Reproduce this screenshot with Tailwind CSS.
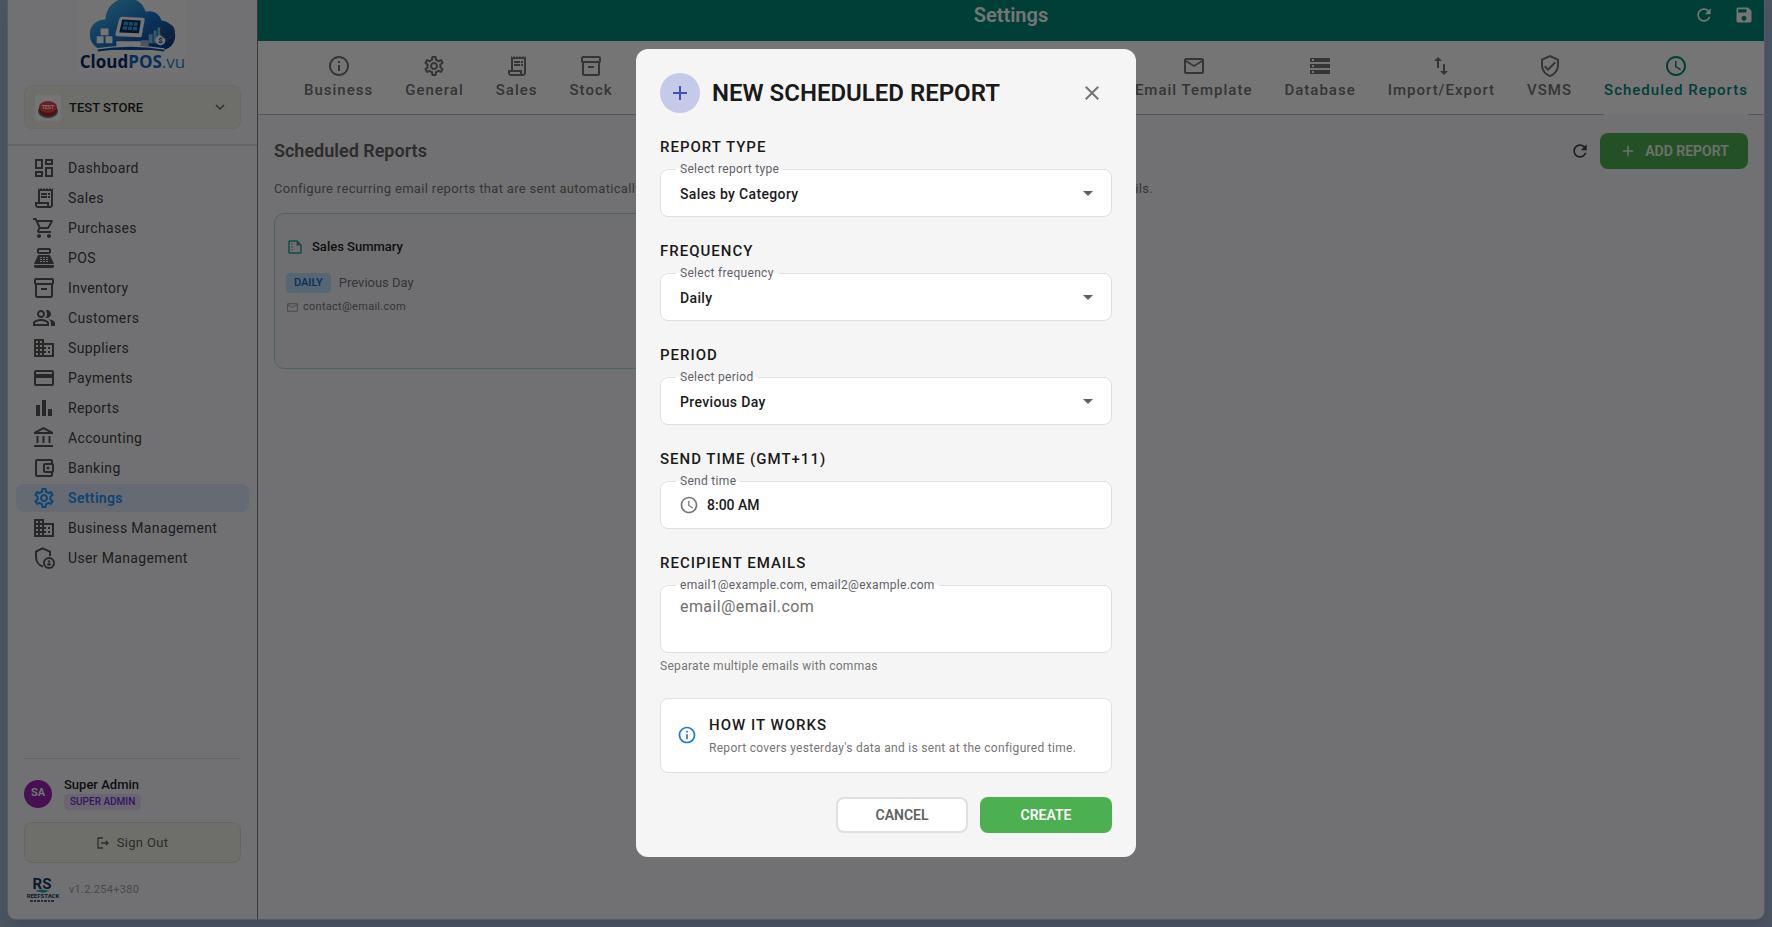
<!DOCTYPE html>
<html lang="en">
<head>
  <meta charset="UTF-8">
  <title>CloudPOS - Settings</title>
  <meta name="viewport" content="width=device-width, initial-scale=1.0">
  <script src="https://cdn.jsdelivr.net/npm/@tailwindcss/browser@4"></script>
</head>
<body class="bg-[#a3b7d3] font-['Roboto',sans-serif] text-[#1f1f1f]">
  <!-- Icons -->
  <svg class="hidden">
    <symbol id="i-dashboard" viewBox="0 0 24 24"><path d="M19 5v2h-4V5h4M9 5v6H5V5h4m10 8v6h-4v-6h4M9 17v2H5v-2h4M21 3h-8v6h8V3zM11 3H3v10h8V3zm10 8h-8v10h8V11zm-10 4H3v6h8v-6z"/></symbol>
    <symbol id="i-receipt" viewBox="0 0 24 24"><path d="M19.5 3.5L18 2l-1.500 1.500L15 2l-1.500 1.500L12 2l-1.500 1.500L9 2 7.500 3.500 6 2v14H3v3c0 1.660 1.340 3 3 3h12c1.660 0 3-1.340 3-3V2l-1.500 1.500zM15 20H6c-.55 0-1-.45-1-1v-1h10v2zm4-1c0 .55-.45 1-1 1s-1-.45-1-1v-3H8V5h11v14z"/><path d="M9 7h6v2H9zM16 7h2v2h-2zM9 10h6v2H9zM16 10h2v2h-2z"/></symbol>
    <symbol id="i-cart" viewBox="0 0 24 24"><path d="M15.55 13c.75 0 1.41-.41 1.75-1.03l3.58-6.49c.37-.66-.11-1.48-.87-1.48H5.21l-.94-2H1v2h2l3.600 7.590-1.350 2.440C4.520 15.370 5.480 17 7 17h12v-2H7l1.100-2h7.450zM6.160 6h12.150l-2.760 5H8.530L6.160 6zM7 18c-1.100 0-1.990.9-1.990 2S5.900 22 7 22s2-.9 2-2-.9-2-2-2zm10 0c-1.100 0-1.990.9-1.990 2s.89 2 1.990 2 2-.9 2-2-.9-2-2-2z"/></symbol>
    <symbol id="i-pos" viewBox="0 0 24 24"><path fill-rule="evenodd" d="M17 2H7c-1.100 0-2 .9-2 2v2c0 1.100.9 2 2 2h10c1.100 0 2-.9 2-2V4c0-1.100-.9-2-2-2zm0 4H7V4h10v2zM20 22H4c-1.100 0-2-.9-2-2v-1h20v1c0 1.100-.9 2-2 2zM18.530 10.190C18.210 9.470 17.490 9 16.700 9H7.300c-.79 0-1.510.47-1.830 1.190L2 18h20l-3.470-7.810zM8 11h2v1H8zM8 13h2v1H8zM8 15h2v1H8zM11 11h2v1h-2zM11 13h2v1h-2zM11 15h2v1h-2zM14 11h2v1h-2zM14 13h2v1h-2zM14 15h2v1h-2z"/></symbol>
    <symbol id="i-box" viewBox="0 0 24 24"><path d="M20 2H4c-1 0-2 .9-2 2v3.010c0 .72.43 1.340 1 1.690V20c0 1.100 1.100 2 2 2h14c.9 0 2-.9 2-2V8.700c.57-.35 1-.97 1-1.690V4c0-1.100-1-2-2-2zm-1 18H5V9h14v11zm1-13H4V4h16v3z"/><path d="M9 12h6v2H9z"/></symbol>
    <symbol id="i-people" viewBox="0 0 24 24"><path d="M16.670 13.130C18.040 14.060 19 15.320 19 17v3h4v-3c0-2.180-3.570-3.470-6.330-3.870zM15 12c2.210 0 4-1.790 4-4s-1.790-4-4-4c-.47 0-.91.1-1.330.24C14.500 5.270 15 6.580 15 8s-.5 2.730-1.330 3.760c.42.14.86.24 1.330.24zM9 12c2.210 0 4-1.790 4-4s-1.790-4-4-4-4 1.790-4 4 1.790 4 4 4zm0-6c1.100 0 2 .9 2 2s-.9 2-2 2-2-.9-2-2 .9-2 2-2zM9 13c-2.670 0-8 1.340-8 4v3h16v-3c0-2.660-5.330-4-8-4zm6 5H3v-.99C3.200 16.290 6.300 15 9 15s5.800 1.290 6 2v1z"/></symbol>
    <symbol id="i-domain" viewBox="0 0 24 24"><path d="M12 7V3H2v18h20V7H12zM6 19H4v-2h2v2zm0-4H4v-2h2v2zm0-4H4V9h2v2zm0-4H4V5h2v2zm4 12H8v-2h2v2zm0-4H8v-2h2v2zm0-4H8V9h2v2zm0-4H8V5h2v2zm10 12h-8v-2h2v-2h-2v-2h2v-2h-2V9h8v10zm-2-8h-2v2h2v-2zm0 4h-2v2h2v-2z"/></symbol>
    <symbol id="i-card" viewBox="0 0 24 24"><path d="M20 4H4c-1.110 0-1.990.89-1.990 2L2 18c0 1.110.89 2 2 2h16c1.110 0 2-.89 2-2V6c0-1.110-.89-2-2-2zm0 14H4v-6h16v6zm0-10H4V6h16v2z"/></symbol>
    <symbol id="i-chart" viewBox="0 0 24 24"><path d="M4 9h4v11H4zM16 13h4v7h-4zM10 4h4v16h-4z"/></symbol>
    <symbol id="i-bank" viewBox="0 0 24 24"><path d="M6.500 10h-2v7h2v-7zm6 0h-2v7h2v-7zm8.500 9H2v2h19v-2zm-2.500-9h-2v7h2v-7zm-7-6.740L16.710 6H6.290l5.210-2.740m0-2.260L2 6v2h19V6l-9.500-5z"/></symbol>
    <symbol id="i-wallet" viewBox="0 0 24 24"><path d="M21 7.280V5c0-1.100-.9-2-2-2H5c-1.110 0-2 .9-2 2v14c0 1.100.89 2 2 2h14c1.100 0 2-.9 2-2v-2.280c.59-.35 1-.98 1-1.720V9c0-.74-.41-1.370-1-1.720zM20 9v6h-7V9h7zM5 19V5h14v2h-6c-1.100 0-2 .9-2 2v6c0 1.100.9 2 2 2h6v2H5z"/><circle cx="16" cy="12" r="1.500"/></symbol>
    <symbol id="i-settings" viewBox="0 0 24 24"><path d="M19.43 12.98c.04-.32.07-.64.07-.98 0-.34-.03-.66-.07-.98l2.11-1.65c.19-.15.24-.42.12-.64l-2-3.46c-.09-.16-.26-.25-.44-.25-.06 0-.12.01-.17.03l-2.49 1c-.52-.4-1.08-.73-1.69-.98l-.38-2.65C14.46 2.18 14.25 2 14 2h-4c-.25 0-.46.18-.49.42l-.38 2.65c-.61.25-1.17.59-1.69.98l-2.49-1c-.06-.02-.12-.03-.18-.03-.17 0-.34.09-.43.25l-2 3.46c-.13.22-.07.49.12.64l2.11 1.65c-.04.32-.07.65-.07.98 0 .33.03.66.07.98l-2.11 1.65c-.19.15-.24.42-.12.64l2 3.46c.09.16.26.25.44.25.06 0 .12-.01.17-.03l2.49-1c.52.4 1.08.73 1.69.98l.38 2.65c.03.24.24.42.49.42h4c.25 0 .46-.18.49-.42l.38-2.65c.61-.25 1.17-.59 1.69-.98l2.49 1c.06.02.12.03.18.03.17 0 .34-.09.43-.25l2-3.46c.12-.22.07-.49-.12-.64l-2.11-1.65zm-1.98-1.71c.04.31.05.52.05.73 0 .21-.02.43-.05.73l-.14 1.13.89.7 1.08.84-.7 1.21-1.27-.51-1.04-.42-.9.68c-.43.32-.84.56-1.25.73l-1.06.43-.16 1.13-.2 1.35h-1.4l-.19-1.35-.16-1.13-1.06-.43c-.43-.18-.83-.41-1.23-.71l-.91-.7-1.06.43-1.27.51-.7-1.21 1.08-.84.89-.7-.14-1.13c-.03-.31-.05-.54-.05-.74s.02-.43.05-.73l.14-1.13-.89-.7-1.08-.84.7-1.21 1.27.51 1.04.42.9-.68c.43-.32.84-.56 1.25-.73l1.06-.43.16-1.13.2-1.35h1.39l.19 1.35.16 1.13 1.06.43c.43.18.83.41 1.23.71l.91.7 1.06-.43 1.27-.51.7 1.21-1.07.85-.89.7.14 1.13zM12 8c-2.21 0-4 1.79-4 4s1.79 4 4 4 4-1.79 4-4-1.79-4-4-4zm0 6c-1.1 0-2-.9-2-2s.9-2 2-2 2 .9 2 2-.9 2-2 2z"/></symbol>
    <symbol id="i-admin" viewBox="0 0 24 24"><g fill="none" stroke="currentColor" stroke-width="2"><path d="M18 10V5.600l-7.500-3.200L4 5.600V11c0 4.400 2.800 8.400 7 9.500"/><circle cx="17" cy="17" r="5"/></g><circle cx="17" cy="15.500" r="1.200"/><path d="M14.700 18.500c.5-.8 1.400-1.200 2.300-1.200s1.800.4 2.300 1.200c-.5.7-1.400 1.200-2.300 1.200s-1.800-.5-2.300-1.200z"/></symbol>
    <symbol id="i-info" viewBox="0 0 24 24"><path d="M11 7h2v2h-2zm0 4h2v6h-2zm1-9C6.480 2 2 6.480 2 12s4.480 10 10 10 10-4.480 10-10S17.520 2 12 2zm0 18c-4.410 0-8-3.590-8-8s3.590-8 8-8 8 3.590 8 8-3.590 8-8 8z"/></symbol>
    <symbol id="i-mail" viewBox="0 0 24 24"><path d="M22 6c0-1.100-.9-2-2-2H4c-1.100 0-2 .9-2 2v12c0 1.100.9 2 2 2h16c1.100 0 2-.9 2-2V6zm-2 0l-8 5-8-5h16zm0 12H4V8l8 5 8-5v10z"/></symbol>
    <symbol id="i-storage" viewBox="0 0 24 24"><path d="M2 20h20v-4H2v4zm2-3h2v2H4v-2zM2 4v4h20V4H2zm4 3H4V5h2v2zm-4 7h20v-4H2v4zm2-3h2v2H4v-2z"/></symbol>
    <symbol id="i-swap" viewBox="0 0 24 24"><path d="M9 3L5 6.990h3V14h2V6.990h3L9 3zm7 14.010V10h-2v7.010h-3L15 21l4-3.990h-3z"/></symbol>
    <symbol id="i-verified" viewBox="0 0 24 24"><path d="M12 1L3 5v6c0 5.550 3.840 10.740 9 12 5.160-1.260 9-6.450 9-12V5l-9-4zm7 10c0 4.520-2.980 8.690-7 9.930-4.020-1.240-7-5.410-7-9.930V6.300l7-3.110 7 3.110V11zm-11.590.59L6 13l4 4 8-8-1.410-1.420L10 14.170z"/></symbol>
    <symbol id="i-clock" viewBox="0 0 24 24"><path d="M11.990 2C6.470 2 2 6.480 2 12s4.470 10 9.990 10C17.520 22 22 17.520 22 12S17.520 2 11.990 2zM12 20c-4.420 0-8-3.580-8-8s3.580-8 8-8 8 3.580 8 8-3.580 8-8 8zm.5-13H11v6l5.250 3.150.75-1.230-4.500-2.670z"/></symbol>
    <symbol id="i-refresh" viewBox="0 0 24 24"><path d="M17.650 6.350C16.200 4.900 14.210 4 12 4c-4.420 0-7.990 3.580-7.990 8s3.570 8 7.990 8c3.730 0 6.840-2.550 7.730-6h-2.080c-.82 2.330-3.040 4-5.650 4-3.310 0-6-2.690-6-6s2.690-6 6-6c1.660 0 3.140.69 4.220 1.780L13 11h7V4l-2.350 2.350z"/></symbol>
    <symbol id="i-save" viewBox="0 0 24 24"><path d="M17 3H5c-1.110 0-2 .9-2 2v14c0 1.100.89 2 2 2h14c1.100 0 2-.9 2-2V7l-4-4zm-5 16c-1.660 0-3-1.340-3-3s1.340-3 3-3 3 1.340 3 3-1.340 3-3 3zm3-10H5V5h10v4z"/></symbol>
    <symbol id="i-add" viewBox="0 0 24 24"><path d="M19 13h-6v6h-2v-6H5v-2h6V5h2v6h6v2z"/></symbol>
    <symbol id="i-close" viewBox="0 0 24 24"><path d="M19 6.410L17.590 5 12 10.590 6.410 5 5 6.410 10.590 12 5 17.590 6.410 19 12 13.410 17.590 19 19 17.590 13.410 12z"/></symbol>
    <symbol id="i-report" viewBox="0 0 24 24"><path d="M15 3H5c-1.100 0-2 .9-2 2v14c0 1.100.9 2 2 2h14c1.100 0 2-.9 2-2V9l-6-6zM5 19V5h9v5h5v9H5z"/><circle cx="8" cy="8" r="1"/><circle cx="8" cy="12" r="1"/><circle cx="8" cy="16" r="1"/></symbol>
    <symbol id="i-drop" viewBox="0 0 24 24"><path d="M7 10l5 5 5-5z"/></symbol>
  </svg>

  <div class="min-h-screen flex px-2 pb-2">
    <div class="flex flex-1 rounded-b-lg bg-[#f7f7fa] ring-1 ring-[#b9c9de] shadow-lg overflow-hidden">

      <!-- Sidebar -->
      <aside class="w-[250px] shrink-0 flex flex-col border-r border-[#7e7e82]">
        <div class="w-[109px] h-[72px] mx-auto bg-[#fafafb] flex flex-col items-center">
          <svg class="w-[90px] h-[52px] shrink-0" viewBox="0 0 90 53">
            <defs>
              <linearGradient id="cloud" x1="0" y1="0" x2="1" y2="1"><stop offset="0" stop-color="#4cc4e8"/><stop offset=".55" stop-color="#1b72c8"/><stop offset="1" stop-color="#06327e"/></linearGradient>
            </defs>
            <path fill="url(#cloud)" d="M18 51C7 51 1 44 1 35c0-9 7-15 16-15C17 7 28-2 39-2c9 0 16 5 19 14 8-2 14 2 16 9 8 1 14 7 14 15 0 9-6 15-15 15z"/>
            <path fill="#fff" d="M8 37h7v7H8zM17 37h7v7h-7zM12 29h8v7h-8z"/>
            <path fill="#fff" d="M34 17l21 1q2 0 2 2l-3 16q0 2-2 2l-23-1q-2 0-2-2l4-16q1-2 3-2zM28 42h25v6H28z"/>
            <path fill="#0b2f6b" d="M34 20l19 1-2 13-20-1z"/>
            <path fill="#35a2dd" d="M36 22l14 1-1 8-15-1z"/>
            <path stroke="#0b2f6b" d="M41 22l-2 9M46 22l-2 9M34 26l16 1"/>
            <path fill="#a9b9dd" d="M53 41h8v6h-8z"/>
            <path fill="#78c5e8" d="M61 35h4v9h-4zM66 31h3v13h-3zM70 28h3v16h-3z"/>
            <circle cx="73" cy="41" r="5" fill="#fff"/>
            <circle cx="80" cy="32" r="7" fill="none" stroke="#46536b" stroke-width="1.500"/>
            <path fill="none" stroke="#0c4ea0" stroke-width="3" d="M9 51q34-5 68 0"/>
            <path fill="none" stroke="#fff" stroke-width="1.500" d="M7 50q36-6 70 0"/>
            <text x="73" y="44" text-anchor="middle" font-size="8" font-weight="700" fill="#0c3e86">$</text>
          </svg>
          <div class="h-5 font-['Open_Sans',sans-serif] text-[17px] leading-5 font-bold text-[#0a2a6c] whitespace-nowrap">Cloud<span class="text-[#1462c4]">POS</span><span class="font-medium text-[#2c86cc]">.vu</span></div>
        </div>

        <button type="button" class="mx-4 mt-[13px] h-11 flex items-center rounded-lg border border-[#e6e6dc] bg-[#f0f0e8] px-[10px] pt-[2px] text-left">
          <svg class="w-[26px] h-[26px] mr-2" viewBox="0 0 26 26">
            <rect width="26" height="26" rx="4" fill="#fff"/>
            <ellipse cx="13" cy="16" rx="10" ry="7" fill="#6f6f6f"/>
            <ellipse cx="13" cy="14" rx="9" ry="7" fill="#a81f26"/>
            <ellipse cx="13" cy="12" rx="9" ry="6" fill="#e5484d"/>
            <text x="13" y="14" text-anchor="middle" font-size="5" font-weight="700" fill="#fff">TEST</text>
          </svg>
          <span class="flex-1 text-[13px] font-medium">TEST STORE</span>
          <svg class="w-5 h-5 text-[#616161]" viewBox="0 0 20 20" fill="none" stroke="currentColor" stroke-width="1.500"><path d="M6 7l4 4 4-4"/></svg>
        </button>

        <div class="mt-[15px] h-[2px] bg-[#dcdce0]"></div>

        <nav class="flex flex-col gap-[2px] px-2 pt-2 text-sm tracking-wide text-[#424242]">
          <a href="#" class="h-7 flex items-center gap-3 px-4 rounded-lg"><svg class="w-6 h-6 fill-current text-[#555555]"><use href="#i-dashboard"/></svg>Dashboard</a>
          <a href="#" class="h-7 flex items-center gap-3 px-4 rounded-lg"><svg class="w-6 h-6 fill-current text-[#555555]"><use href="#i-receipt"/></svg>Sales</a>
          <a href="#" class="h-7 flex items-center gap-3 px-4 rounded-lg"><svg class="w-6 h-6 fill-current text-[#555555]"><use href="#i-cart"/></svg>Purchases</a>
          <a href="#" class="h-7 flex items-center gap-3 px-4 rounded-lg"><svg class="w-6 h-6 fill-current text-[#555555]"><use href="#i-pos"/></svg>POS</a>
          <a href="#" class="h-7 flex items-center gap-3 px-4 rounded-lg"><svg class="w-6 h-6 fill-current text-[#555555]"><use href="#i-box"/></svg>Inventory</a>
          <a href="#" class="h-7 flex items-center gap-3 px-4 rounded-lg"><svg class="w-6 h-6 fill-current text-[#555555]"><use href="#i-people"/></svg>Customers</a>
          <a href="#" class="h-7 flex items-center gap-3 px-4 rounded-lg"><svg class="w-6 h-6 fill-current text-[#555555]"><use href="#i-domain"/></svg>Suppliers</a>
          <a href="#" class="h-7 flex items-center gap-3 px-4 rounded-lg"><svg class="w-6 h-6 fill-current text-[#555555]"><use href="#i-card"/></svg>Payments</a>
          <a href="#" class="h-7 flex items-center gap-3 px-4 rounded-lg"><svg class="w-6 h-6 fill-current text-[#555555]"><use href="#i-chart"/></svg>Reports</a>
          <a href="#" class="h-7 flex items-center gap-3 px-4 rounded-lg"><svg class="w-6 h-6 fill-current text-[#555555]"><use href="#i-bank"/></svg>Accounting</a>
          <a href="#" class="h-7 flex items-center gap-3 px-4 rounded-lg"><svg class="w-6 h-6 fill-current text-[#555555]"><use href="#i-wallet"/></svg>Banking</a>
          <a href="#" class="h-7 flex items-center gap-3 px-4 rounded-lg bg-[#dde7fa] text-[#2196f3] font-semibold"><svg class="w-6 h-6 fill-current"><use href="#i-settings"/></svg>Settings</a>
          <a href="#" class="h-7 flex items-center gap-3 px-4 rounded-lg"><svg class="w-6 h-6 fill-current text-[#555555]"><use href="#i-domain"/></svg>Business Management</a>
          <a href="#" class="h-7 flex items-center gap-3 px-4 rounded-lg"><svg class="w-6 h-6 fill-current text-[#555555]"><use href="#i-admin"/></svg>User Management</a>
        </nav>

        <div class="mt-auto mx-4 border-t border-[#dcdce0] pt-[18px] pb-[14px]">
          <div class="flex items-center gap-3">
            <div class="w-7 h-7 rounded-full bg-[#9c27b0] text-white text-[11px] font-semibold flex items-center justify-center">SA</div>
            <div class="flex flex-col items-start gap-px">
              <div class="text-[13px] leading-4 font-medium">Super Admin</div>
              <div class="px-[6px] rounded bg-[#e6dcf5] text-[#6a33d6] text-[10px] leading-4 font-medium">SUPER ADMIN</div>
            </div>
          </div>
          <button type="button" class="mt-3 w-full h-[41px] rounded-lg border border-[#dedecf] bg-[#f0f0e8] flex items-center justify-center gap-2 text-[13px] tracking-wide text-[#616161]">
            <svg class="w-3 h-3" viewBox="0 0 12 12" fill="none" stroke="currentColor" stroke-width="1.300"><path d="M6 1H1v10h5M4 6h7M9 4l2 2-2 2"/></svg>
            Sign Out
          </button>
          <div class="mt-3 flex items-center gap-2">
            <svg class="w-[37px] h-[30px]" viewBox="0 0 37 30" text-anchor="middle" font-weight="700">
              <text x="18" y="14" font-size="15" fill="#0f3c5c">RS</text>
              <path d="M11 16q8-3 14 0-6 3-9 1z" fill="#2aa7a0"/>
              <text x="19" y="23" font-size="6" fill="#0f3c5c">REEFSTACK</text>
              <path d="M6 26h25" stroke="#0f3c5c" stroke-width="1.500" stroke-dasharray="3 1 2 1"/>
            </svg>
            <span class="text-[11px] tracking-wide text-[#9e9e9e]">v1.2.254+380</span>
          </div>
        </div>
      </aside>

      <!-- Main -->
      <main class="flex-1 min-w-0">
        <header class="h-[41px] pb-3 px-[10px] grid grid-cols-3 items-center bg-[#00897b] text-white">
          <span></span>
          <h1 class="text-center text-xl font-semibold">Settings</h1>
          <div class="flex justify-end gap-5">
            <button type="button" aria-label="Refresh"><svg class="w-5 h-5 fill-current"><use href="#i-refresh"/></svg></button>
            <button type="button" aria-label="Save"><svg class="w-5 h-5 fill-current"><use href="#i-save"/></svg></button>
          </div>
        </header>

        <div class="flex justify-between h-[74px] bg-white border-b border-[#bdbdc2] pl-[30px] text-[15px] leading-[18px] font-medium tracking-[1px] text-[#757575] whitespace-nowrap">
          <div class="flex">
            <a href="#" class="px-4 pt-[13px] flex flex-col items-center gap-[3px]"><svg class="w-6 h-6 fill-current"><use href="#i-info"/></svg>Business</a>
            <a href="#" class="px-4 pt-[13px] flex flex-col items-center gap-[3px]"><svg class="w-6 h-6 fill-current"><use href="#i-settings"/></svg>General</a>
            <a href="#" class="px-4 pt-[13px] flex flex-col items-center gap-[3px]"><svg class="w-6 h-6 fill-current"><use href="#i-receipt"/></svg>Sales</a>
            <a href="#" class="px-4 pt-[13px] flex flex-col items-center gap-[3px]"><svg class="w-6 h-6 fill-current"><use href="#i-box"/></svg>Stock</a>
          </div>
          <div class="flex">
            <a href="#" class="px-4 pt-[13px] flex flex-col items-center gap-[3px]"><svg class="w-6 h-6 fill-current"><use href="#i-mail"/></svg>Email Template</a>
            <a href="#" class="px-4 pt-[13px] flex flex-col items-center gap-[3px]"><svg class="w-6 h-6 fill-current"><use href="#i-storage"/></svg>Database</a>
            <a href="#" class="px-4 pt-[13px] flex flex-col items-center gap-[3px]"><svg class="w-6 h-6 fill-current"><use href="#i-swap"/></svg>Import/Export</a>
            <a href="#" class="px-4 pt-[13px] flex flex-col items-center gap-[3px]"><svg class="w-6 h-6 fill-current"><use href="#i-verified"/></svg>VSMS</a>
            <a href="#" class="mx-4 pt-[13px] -mb-px border-b border-white flex flex-col items-center gap-[3px] text-[#00897b]"><svg class="w-6 h-6 fill-current"><use href="#i-clock"/></svg>Scheduled Reports</a>
          </div>
        </div>

        <div class="p-4 pt-[18px]">
          <div class="flex items-center">
            <h2 class="flex-1 text-lg font-semibold text-[#616161]">Scheduled Reports</h2>
            <button type="button" aria-label="Reload reports" class="mr-[10px]"><svg class="w-5 h-5 fill-current text-[#424242]"><use href="#i-refresh"/></svg></button>
            <button type="button" class="h-9 w-[148px] justify-center rounded-lg bg-[#4caf50] text-white/90 text-sm font-semibold flex items-center gap-2"><svg class="w-[18px] h-[18px] fill-current"><use href="#i-add"/></svg>ADD REPORT</button>
          </div>
          <p class="mt-[10px] text-[13px] leading-5 tracking-wide text-[#757575]">Configure recurring email reports that are sent automatically to your recipients. Select a report below to edit schedule, recipients or other details.</p>

          <div class="mt-[14px] grid grid-cols-3 gap-4">
            <article class="h-[156px] rounded-[10px] border border-[#a5d8d4] bg-[#f2f1f6] px-[11px] pt-[23px]">
              <h3 class="flex items-center gap-2 text-[13px] leading-5 font-medium"><svg class="w-[18px] h-[18px] fill-current text-[#26a69a]"><use href="#i-report"/></svg>Sales Summary</h3>
              <div class="mt-4 flex items-center gap-2 text-[13px] leading-5 text-[#757575]"><span class="px-2 rounded bg-[#bbdefb] text-[#1565c0] text-[11px] leading-5 font-medium">DAILY</span>Previous Day</div>
              <div class="mt-1 flex items-center gap-1 text-[11px] leading-5 tracking-wide text-[#757575]"><svg class="w-[13px] h-[13px] fill-current text-[#9e9e9e]"><use href="#i-mail"/></svg>contact@email.com</div>
            </article>
          </div>
        </div>
      </main>
    </div>
  </div>

  <!-- New scheduled report dialog -->
  <div class="fixed inset-0 bg-black/54 flex items-center justify-center pb-[22px]">
    <form role="dialog" aria-labelledby="dialog-title" class="w-[500px] rounded-xl bg-[#f5f5f5] p-6 flex flex-col gap-6 text-[#1a1a1a]">
      <div class="flex items-center gap-3">
        <div class="w-10 h-10 rounded-full bg-[#c5cae9] flex items-center justify-center"><svg class="w-6 h-6 fill-current text-[#3f51b5]"><use href="#i-add"/></svg></div>
        <h2 id="dialog-title" class="flex-1 text-2xl font-semibold">NEW SCHEDULED REPORT</h2>
        <button type="button" aria-label="Close" class="w-10 h-10 flex items-center justify-center"><svg class="w-6 h-6 fill-current text-[#757575]"><use href="#i-close"/></svg></button>
      </div>

      <section>
        <h3 class="text-[15px] leading-5 font-medium tracking-[1px]">REPORT TYPE</h3>
        <div class="relative mt-3">
          <label for="report-type" class="absolute left-4 -top-2 px-1 bg-linear-to-b from-[#f5f5f5] from-50% to-white to-50% text-xs leading-4 tracking-wide text-[#5f6168]">Select report type</label>
          <select id="report-type" class="w-full h-12 px-[19px] pt-[2px] appearance-none rounded-lg border border-[#e0e0e0] bg-white text-sm font-medium tracking-wide"><option>Sales by Category</option></select>
          <svg class="absolute right-3 top-3 w-6 h-6 fill-current text-[#616161] pointer-events-none"><use href="#i-drop"/></svg>
        </div>
      </section>

      <section>
        <h3 class="text-[15px] leading-5 font-medium tracking-[1px]">FREQUENCY</h3>
        <div class="relative mt-3">
          <label for="frequency" class="absolute left-4 -top-2 px-1 bg-linear-to-b from-[#f5f5f5] from-50% to-white to-50% text-xs leading-4 tracking-wide text-[#5f6168]">Select frequency</label>
          <select id="frequency" class="w-full h-12 px-[19px] pt-[2px] appearance-none rounded-lg border border-[#e0e0e0] bg-white text-sm font-medium tracking-wide"><option>Daily</option></select>
          <svg class="absolute right-3 top-3 w-6 h-6 fill-current text-[#616161] pointer-events-none"><use href="#i-drop"/></svg>
        </div>
      </section>

      <section>
        <h3 class="text-[15px] leading-5 font-medium tracking-[1px]">PERIOD</h3>
        <div class="relative mt-3">
          <label for="period" class="absolute left-4 -top-2 px-1 bg-linear-to-b from-[#f5f5f5] from-50% to-white to-50% text-xs leading-4 tracking-wide text-[#5f6168]">Select period</label>
          <select id="period" class="w-full h-12 px-[19px] pt-[2px] appearance-none rounded-lg border border-[#e0e0e0] bg-white text-sm font-medium tracking-wide"><option>Previous Day</option></select>
          <svg class="absolute right-3 top-3 w-6 h-6 fill-current text-[#616161] pointer-events-none"><use href="#i-drop"/></svg>
        </div>
      </section>

      <section>
        <h3 class="text-[15px] leading-5 font-medium tracking-[1px]">SEND TIME (GMT+11)</h3>
        <div class="relative mt-3">
          <label for="send-time" class="absolute left-4 -top-2 px-1 bg-linear-to-b from-[#f5f5f5] from-50% to-white to-50% text-xs leading-4 tracking-wide text-[#5f6168]">Send time</label>
          <div class="h-12 px-[18px] flex items-center gap-2 rounded-lg border border-[#e0e0e0] bg-white">
            <svg class="w-5 h-5 fill-current text-[#757575]"><use href="#i-clock"/></svg>
            <input id="send-time" type="text" value="8:00 AM" readonly class="flex-1 min-w-0 bg-transparent text-sm font-medium outline-none">
          </div>
        </div>
      </section>

      <section>
        <h3 class="text-[15px] leading-5 font-medium tracking-[1px]">RECIPIENT EMAILS</h3>
        <div class="relative mt-3">
          <label for="emails" class="absolute left-4 -top-2 px-1 bg-linear-to-b from-[#f5f5f5] from-50% to-white to-50% text-xs leading-4 tracking-wide text-[#5f6168]">email1@example.com, email2@example.com</label>
          <textarea id="emails" placeholder="email@email.com" class="block w-full h-[68px] px-[19px] pt-[9px] resize-none rounded-lg border border-[#e0e0e0] bg-white text-base leading-6 tracking-wide placeholder:text-[#6f6f6f]"></textarea>
        </div>
        <p class="mt-[5px] text-xs leading-4 tracking-wide text-[#757575]">Separate multiple emails with commas</p>
      </section>

      <div class="flex items-center gap-3 h-[75px] px-4 rounded-lg border border-[#e0e0e0] bg-white">
        <svg class="w-5 h-5 fill-current text-[#1976d2]"><use href="#i-info"/></svg>
        <div class="pt-[3px]">
          <h3 class="text-[15px] leading-5 font-medium tracking-[1px]">HOW IT WORKS</h3>
          <p class="mt-[3px] text-xs leading-5 tracking-wide text-[#757575]">Report covers yesterday's data and is sent at the configured time.</p>
        </div>
      </div>

      <div class="flex justify-end gap-3">
        <button type="button" class="w-[132px] h-9 rounded-lg border-2 border-[#e0e0e0] bg-white text-sm font-semibold text-[#616161]">CANCEL</button>
        <button type="submit" class="w-[132px] h-9 rounded-lg bg-[#4caf50] text-sm font-semibold text-white">CREATE</button>
      </div>
    </form>
  </div>
</body>
</html>
